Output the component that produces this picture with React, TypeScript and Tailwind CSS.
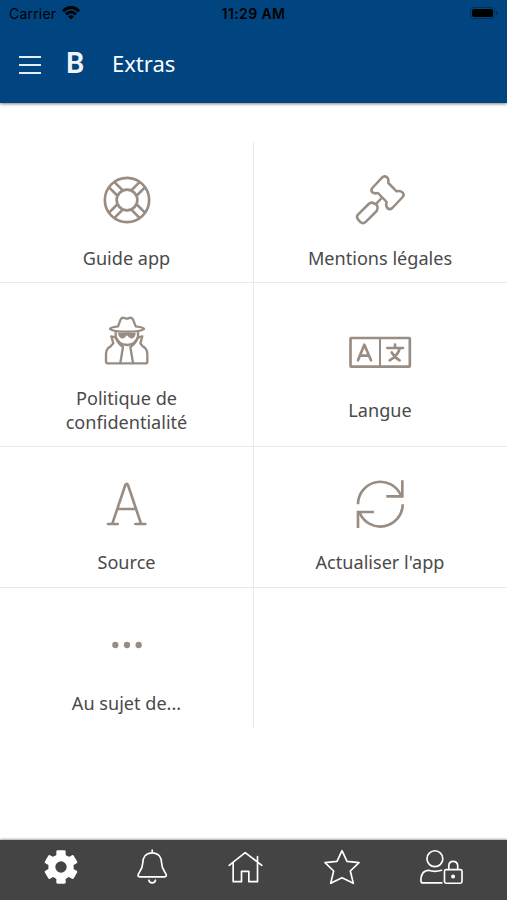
import type { ReactNode } from "react";
import { clsx } from "clsx";

type IconProps = { viewBox: string; className?: string; children: ReactNode };

const TileSvg = ({ viewBox, children }: IconProps) => (
  <svg
    viewBox={viewBox}
    className="h-12 w-16 shrink-0 overflow-visible text-[#998d83]"
    fill="none"
    stroke="currentColor"
    strokeWidth="8"
    strokeLinecap="round"
    strokeLinejoin="round"
  >
    {children}
  </svg>
);

const NavSvg = ({ viewBox, className, children }: IconProps) => (
  <svg
    viewBox={viewBox}
    className={clsx("h-9 shrink-0 overflow-visible", className)}
    fill="none"
    stroke="currentColor"
    strokeWidth="5"
    strokeLinecap="round"
    strokeLinejoin="round"
  >
    {children}
  </svg>
);

const LifeRingIcon = () => (
  <TileSvg viewBox="-96 -72 192 144">
    <circle r="66.500" />
    <circle r="31" />
    {/* Four straps of the ring */}
    <g strokeLinecap="butt">
      <path d="M12 28 38.500 54.500M28 12 54.500 38.500" />
      <path d="M-12 28-38.500 54.500M-28 12-54.500 38.500" />
      <path d="M12-28 38.500-54.500M28-12 54.500-38.500" />
      <path d="M-12-28-38.500-54.500M-28-12-54.500-38.500" />
    </g>
  </TileSvg>
);

const GavelIcon = () => (
  <TileSvg viewBox="144 48 192 144">
    <g strokeWidth="7.500">
      <path d="M246 53Q253 46 261 52Q267 57 265 69L290 94Q301 91 308 98Q314 104 308 111L277 144Q269 151 262 144Q256 137 260 126L234 99Q223 102 217 97Q211 91 217 84Z" />
      <path d="M245 114 229 131" />
      <path d="M206 132Q213 125 222 130L229 134Q236 141 230 153L198 185Q190 193 182 187L174 178Q168 171 174 164Z" />
    </g>
  </TileSvg>
);

const SpyIcon = () => (
  <TileSvg viewBox="135 48 192 144">
    <g strokeWidth="7">
      <path d="M204 79Q180 82 180 87Q188 95 231 95Q274 95 282 87Q282 82 257 79L249 58Q244 51 237 54Q231 58 224 54Q216 51 212 58Z" />
      <path d="M197 98V110Q205 134 231 135Q257 134 264 110V98" />
      <path d="M205 99H256Q255 114 245 115Q236 114 233 106H229Q226 114 217 115Q207 114 205 99Z" fill="currentColor" strokeWidth="2" />
      <path d="M197 112 184 109 190 130 182 139Q169 144 168 162V185Q169 190 175 190H285Q292 190 292 185V162Q291 144 278 139L271 130 277 109 264 112" />
      <path d="M197 113Q204 131 219 141L211 189M264 113Q257 131 241 141L249 189" />
    </g>
  </TileSvg>
);

const LanguageIcon = () => (
  <TileSvg viewBox="85 24 192 144">
    <rect x="92.500" y="54" width="178" height="86" rx="2" />
    <path d="M181 55V139" strokeWidth="6" />
    <path d="M115 121 134 74 154 121M121 107H148" />
    <path d="M203 84H250M226 74V84M240 86Q234 108 210 121M216 97Q225 113 240 121" />
  </TileSvg>
);

const FontIcon = () => (
  <TileSvg viewBox="75 30 192 144">
    <path d="M127 161 166 45Q170 38 174 45L213 161M114 162H143M196 162H226M143 117H198" />
  </TileSvg>
);

const RefreshIcon = () => (
  <TileSvg viewBox="144 30 192 144">
    <g strokeLinecap="butt" strokeLinejoin="miter">
      <path d="M174 103A67 67 0 0 1 303 77" />
      <path d="M307 31V79H259" />
      <path d="M308 103A67 67 0 0 1 179 128" />
      <path d="M174 174V126H222" />
    </g>
  </TileSvg>
);

const DotsIcon = () => (
  <TileSvg viewBox="-96 -72 192 144">
    <g fill="currentColor" stroke="none">
      <circle cx="-35" r="9.500" />
      <circle r="9.500" />
      <circle cx="35" r="9.500" />
    </g>
  </TileSvg>
);

const tiles = [
  { id: 1, title: "Guide app", icon: <LifeRingIcon /> },
  { id: 2, title: "Mentions légales", icon: <GavelIcon /> },
  { id: 3, title: "Politique de confidentialité", icon: <SpyIcon /> },
  { id: 4, title: "Langue", icon: <LanguageIcon /> },
  { id: 5, title: "Source", icon: <FontIcon /> },
  { id: 6, title: "Actualiser l'app", icon: <RefreshIcon /> },
  { id: 7, title: "Au sujet de...", icon: <DotsIcon /> },
];

const StatusBar = () => (
  <div className="grid h-7 grid-cols-3 items-center px-[9px] pb-[2px] font-['Inter',sans-serif] text-[14px] text-black">
    <div className="flex items-center gap-[6px]">
      <span className="tracking-[0.2px]">Carrier</span>
      <svg viewBox="0 0 18 14" className="h-[14px] w-[18px]" fill="none" stroke="currentColor" strokeWidth="3">
        <path d="M1 5.200Q9-2.400 17 5.200M4 8.400Q9 3.600 14 8.400" />
        <path d="M9 13.500 6 10.500Q9 7.800 12 10.500Z" fill="currentColor" stroke="none" />
      </svg>
    </div>
    <span className="text-center font-semibold tracking-[0.4px]">11:29 AM</span>
    <div className="flex items-center justify-end">
      <div className="h-[12px] w-[25px] rounded-[4px] border border-[#023158] p-px">
        <div className="h-full w-full rounded-[2px] bg-black" />
      </div>
      <div className="ml-px h-1 w-[2px] rounded-r bg-[#023158]" />
    </div>
  </div>
);

const Header = () => (
  <header className="z-10 h-[103px] shrink-0 bg-[#00457f] shadow-[0_1px_3px_rgba(0,0,0,0.5)]">
    <StatusBar />
    <div className="flex h-[73px] items-center pl-[19px] text-white">
      <button className="flex w-[22px] flex-col gap-[6px]" aria-label="Menu">
        <span className="h-[2px] bg-[#e3edf5]" />
        <span className="h-[2px] bg-[#e3edf5]" />
        <span className="h-[2px] bg-[#e3edf5]" />
      </button>
      <span className="mb-[3px] ml-[25px] w-[20px] font-['Roboto',sans-serif] text-[29px] leading-9 font-semibold text-[#eef4f9]">
        B
      </span>
      <h1 className="mb-1 ml-[26px] text-[22px] leading-9">Extras</h1>
    </div>
  </header>
);

const BottomNav = () => (
  <nav className="z-10 flex h-[60px] shrink-0 items-start justify-between bg-[#444444] px-[44px] pt-[9px] text-white shadow-[0_-1px_2px_rgba(0,0,0,0.35)]">
    <NavSvg viewBox="-51 -54 102 108" className="w-[34px]">
      <g fill="currentColor" stroke="none">
        <circle r="38" />
        <rect x="-14" y="-50" width="28" height="100" rx="4" />
        <rect x="-14" y="-50" width="28" height="100" rx="4" transform="rotate(60)" />
        <rect x="-14" y="-50" width="28" height="100" rx="4" transform="rotate(120)" />
        <circle r="17" className="fill-[#444444]" />
      </g>
    </NavSvg>
    <NavSvg viewBox="413 58 94 108" className="w-[31px]">
      <path d="M456 61V69C436 69 427 84 427 102C427 122 413 128 413 138Q413 142 418 142H494Q499 142 499 138C499 128 485 122 485 102C485 84 476 69 456 69" />
      <path d="M446 152Q448 160 456 160Q464 160 466 152" />
    </NavSvg>
    <NavSvg viewBox="687 58 104 108" className="w-[35px]">
      <path d="M687 107 735 69 785 107M772 96V81M699 100V156H724V125H746V156H772V100" />
    </NavSvg>
    <NavSvg viewBox="223 58 108 108" className="w-[36px]">
      <path d="M277 63 292 95 328 99 302 124 311 161 277 144 243 161 252 124 226 99 262 95Z" />
    </NavSvg>
    <NavSvg viewBox="511 58 130 108" className="w-[43px]">
      <circle cx="556" cy="87" r="24" />
      <path d="M577 160H519Q514 160 514 154V146Q517 123 536 122Q556 128 576 122" />
      <rect x="585" y="120" width="53" height="41" rx="5" />
      <path d="M598 119V108Q599 95 611 95Q624 95 625 108V119" />
      <circle cx="611" cy="141" r="3.500" fill="currentColor" />
    </NavSvg>
  </nav>
);

export default function App() {
  return (
    <div className="flex h-[900px] w-[507px] flex-col overflow-hidden bg-white font-['Noto_Sans',sans-serif]">
      <Header />
      <main className="flex-1 pt-[39px]">
        <div className="grid grid-cols-[254px_253px] grid-rows-[141px_164px_141px_140px]">
          {tiles.map((tile, i) => (
            <div
              key={tile.id}
              className={clsx(
                "flex flex-col items-center justify-center border-[#e9e9e9]",
                i < 2 ? "pt-[34px] pb-3" : "pt-[33px] pb-[13px]",
                i % 2 === 0 ? "border-r" : "pr-px",
                i < 6 && "border-b"
              )}
            >
              {tile.icon}
              <p className="mt-[22px] w-[150px] text-center text-[18.100px] leading-6 text-[#4a4a4a]">
                {tile.title}
              </p>
            </div>
          ))}
        </div>
      </main>
      <BottomNav />
    </div>
  );
}
